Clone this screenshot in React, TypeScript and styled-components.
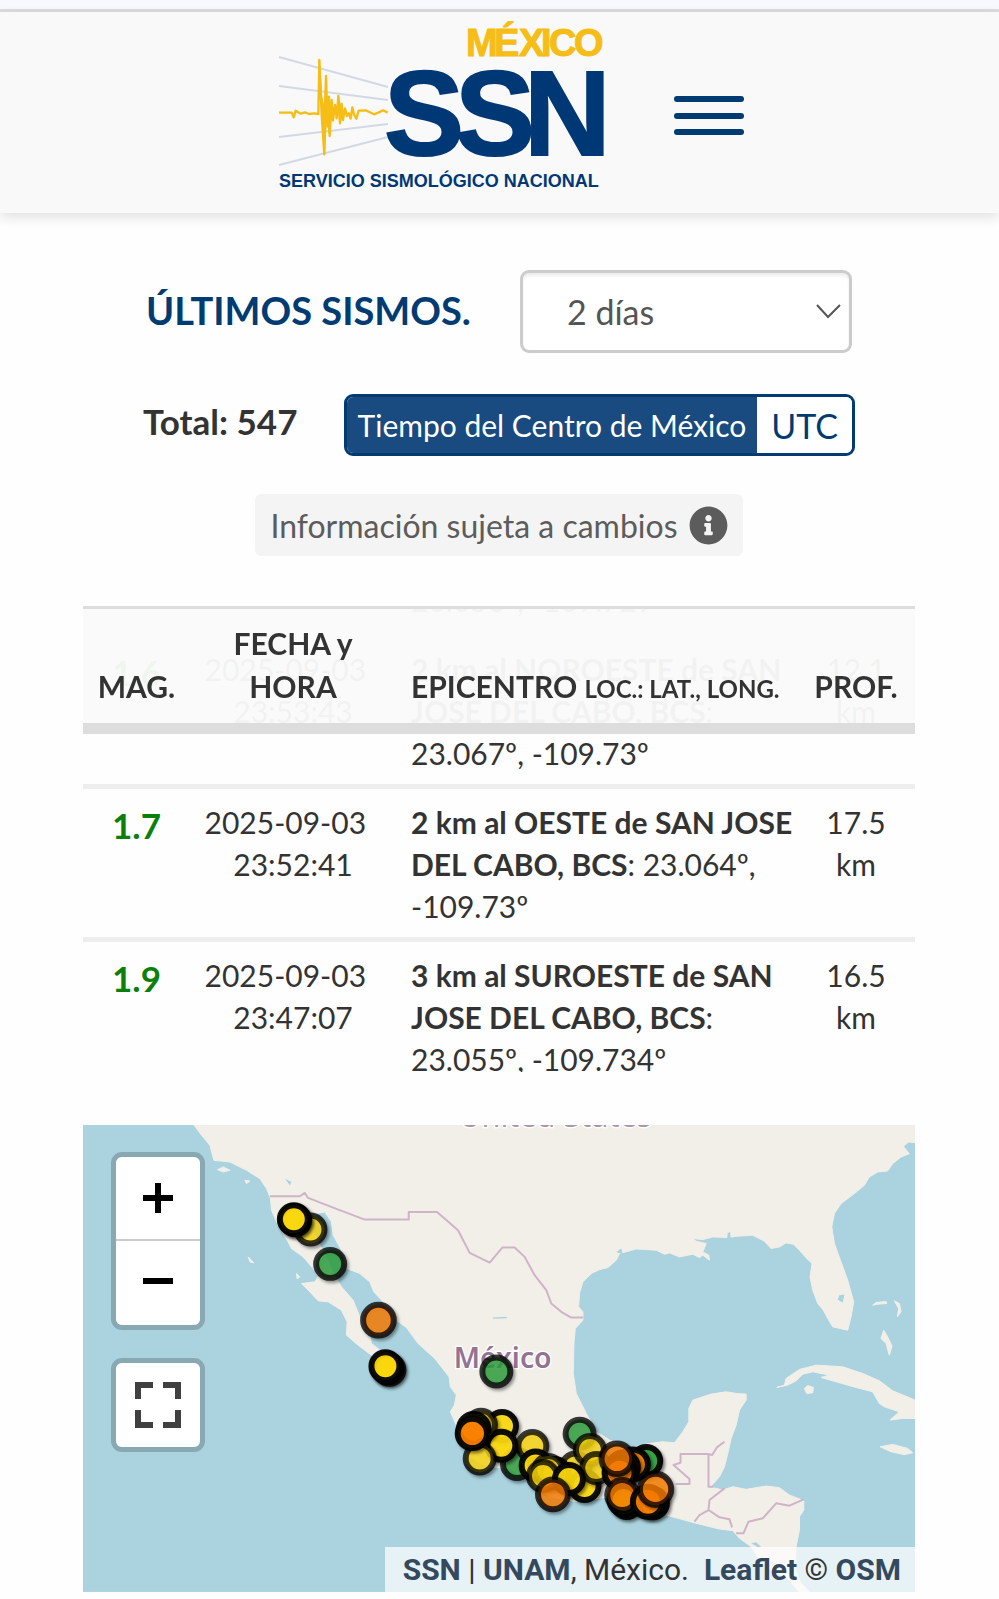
import React, { useLayoutEffect, useRef, useState } from 'react';
import styled, { createGlobalStyle } from 'styled-components';
import { FaInfoCircle } from 'react-icons/fa';

const NAVY = '#003b71';

const GlobalStyle = createGlobalStyle`
  *, *::before, *::after { box-sizing: border-box; }
  body {
    margin: 0;
    background: #fefefe;
    color: #333;
    font-family: Lato, "Liberation Sans", sans-serif;
  }
  button, select { font: inherit; cursor: pointer; }
`;

const TopStrip = styled.div`
  height: 12px;
  background: #f8f8ff;
  border-bottom: 3px solid #dddde1;
`;

const Header = styled.header`
  display: flex;
  justify-content: center;
  align-items: flex-start;
  gap: 70px;
  height: 201px;
  padding-left: 22px;
  background: #f9f9f9;
  box-shadow: 0 4px 12px rgba(0, 0, 0, 0.12);
`;

const LogoLink = styled.a`
  display: block;
  line-height: 0;
`;

const MenuButton = styled.button`
  display: flex;
  flex-direction: column;
  justify-content: space-between;
  width: 70px;
  height: 39px;
  margin-top: 84px;
  padding: 0;
  border: 0;
  background: none;
`;

const MenuBar = styled.span`
  height: 6px;
  border-radius: 3px;
  background: ${NAVY};
`;

const Main = styled.main`
  padding: 57px 84px 7px 83px;
`;

const Line = styled.div<{ $gap: number; $inset: number }>`
  display: flex;
  justify-content: space-between;
  align-items: flex-start;
  padding: 0 ${(p) => p.$inset}px;
  margin-bottom: ${(p) => p.$gap}px;
`;

const Title = styled.h1`
  margin: 0;
  font-size: 38px;
  line-height: 80px;
  font-weight: 700;
  color: ${NAVY};
`;

const SelectWrap = styled.div`
  position: relative;
  width: 332px;
`;

const Select = styled.select`
  appearance: none;
  width: 100%;
  height: 83px;
  padding: 0 44px;
  border: 3px solid #ccc;
  border-radius: 9px;
  background: #fff;
  box-shadow: inset 0 3px 3px rgba(0, 0, 0, 0.07);
  font-size: 34px;
  color: #555;
`;

const Chevron = styled.svg`
  position: absolute;
  right: 11px;
  top: 34px;
  pointer-events: none;
`;

const Total = styled.p`
  margin: 0;
  font-size: 35px;
  line-height: 54px;
  font-weight: 700;
`;

const Toggle = styled.div`
  display: flex;
  border: 3px solid ${NAVY};
  border-radius: 9px;
  overflow: hidden;
`;

const ToggleButton = styled.button<{ $active: boolean; $wide?: boolean }>`
  height: 56px;
  padding: 0 ${(p) => (p.$wide ? 11 : 14)}px;
  border: 0;
  background: ${(p) => (p.$active ? '#194a80' : '#fff')};
  color: ${(p) => (p.$active ? '#fff' : NAVY)};
  font-size: ${(p) => (p.$wide ? 30 : 34)}px;
`;

const NoticeRow = styled.div`
  display: flex;
  justify-content: center;
  margin-bottom: 50px;
`;

const Notice = styled.div`
  display: flex;
  align-items: center;
  gap: 11px;
  height: 62px;
  padding: 0 15px;
  border-radius: 6px;
  background: #f4f4f4;
  color: #5c5c5c;
  font-size: 32px;
`;

const Scroller = styled.div`
  height: 466px;
  overflow-y: auto;
  scrollbar-width: none;
  margin-bottom: 53px;
`;

const Table = styled.table`
  width: 100%;
  table-layout: fixed;
  border-collapse: separate;
  border-spacing: 0;
  font-size: 30px;
  line-height: 42px;
`;

const HeadCell = styled.th<{ $left?: boolean }>`
  position: sticky;
  top: 0;
  padding: ${(p) => (p.$left ? '13px 0 15px 15px' : '13px 0 15px')};
  border-top: 3px solid #ddd;
  border-bottom: 11px solid #ddd;
  background: rgba(250, 250, 250, 0.96);
  vertical-align: bottom;
  text-align: ${(p) => (p.$left ? 'left' : 'center')};
  font-weight: 700;
  line-height: 43px;

  small {
    font-size: 24px;
    line-height: 24px;
  }
`;

const Cell = styled.td<{ $left?: boolean; $side?: number }>`
  padding: 12px ${(p) => p.$side ?? 0}px 10px ${(p) => (p.$left ? 15 : p.$side ?? 0)}px;
  border-top: 5px solid #eee;
  vertical-align: top;
  text-align: ${(p) => (p.$left ? 'left' : 'center')};
`;

const Magnitude = styled.strong`
  display: block;
  font-size: 35px;
  line-height: 48px;
  color: #0a800a;
`;

const MapFrame = styled.section`
  position: relative;
  overflow: hidden;
  font-family: Roboto, "Liberation Sans", sans-serif;
`;

const MapSvg = styled.svg`
  display: block;
  width: 100%;
  height: auto;
`;

const Controls = styled.div`
  position: absolute;
  left: 28px;
  top: 27px;
  display: flex;
  flex-direction: column;
  gap: 28px;
`;

const ControlGroup = styled.div`
  border: 5px solid rgba(0, 0, 0, 0.2);
  background-clip: padding-box;
  border-radius: 11px;
  overflow: hidden;
`;

const ControlButton = styled.button`
  display: flex;
  align-items: center;
  justify-content: center;
  width: 84px;
  height: 84px;
  padding: 0;
  border: 0;
  background: #fff;

  &:not(:last-child) { border-bottom: 2px solid #ccc; }
`;

const Attribution = styled.div`
  position: absolute;
  right: 0;
  bottom: 0;
  padding: 0 14px 0 18px;
  background: rgba(255, 255, 255, 0.7);
  font-size: 30px;
  line-height: 45px;
  white-space: pre;
  color: #333;

  a {
    color: #34495e;
    font-weight: 700;
    text-decoration: none;
  }
`;

type Quake = {
  mag: string;
  date: string;
  time: string;
  place: string;
  coords: string;
  depth: string;
};

const quakes: Quake[] = [
  { mag: '1.8', date: '2025-09-03', time: '23:55:02', place: '3 km al NOROESTE de SAN JOSE DEL CABO, BCS', coords: '23.056º, -109.729º', depth: '15.2' },
  { mag: '1.6', date: '2025-09-03', time: '23:53:43', place: '2 km al NOROESTE de SAN JOSE DEL CABO, BCS', coords: '23.067º, -109.73º', depth: '12.1' },
  { mag: '1.7', date: '2025-09-03', time: '23:52:41', place: '2 km al OESTE de SAN JOSE DEL CABO, BCS', coords: '23.064º, -109.73º', depth: '17.5' },
  { mag: '1.9', date: '2025-09-03', time: '23:47:07', place: '3 km al SUROESTE de SAN JOSE DEL CABO, BCS', coords: '23.055º, -109.734º', depth: '16.5' },
];

const LATEST_OFFSET = 256;

function QuakeTable() {
  const ref = useRef<HTMLDivElement>(null);
  useLayoutEffect(() => {
    if (ref.current) ref.current.scrollTop = LATEST_OFFSET;
  }, []);
  return (
    <Scroller ref={ref}>
      <Table>
        <colgroup>
          <col style={{ width: 107 }} />
          <col style={{ width: 206 }} />
          <col />
          <col style={{ width: 118 }} />
        </colgroup>
        <thead>
          <tr>
            <HeadCell scope="col">MAG.</HeadCell>
            <HeadCell scope="col">FECHA y<br />HORA</HeadCell>
            <HeadCell scope="col" $left>EPICENTRO <small>LOC.: LAT., LONG.</small></HeadCell>
            <HeadCell scope="col">PROF.</HeadCell>
          </tr>
        </thead>
        <tbody>
          {quakes.map((q) => (
            <tr key={q.time}>
              <Cell><Magnitude>{q.mag}</Magnitude></Cell>
              <Cell>{q.date}{'\u00a0\u00a0'}<br />{q.time}</Cell>
              <Cell $left><strong>{q.place}</strong>: {q.coords}</Cell>
              <Cell $side={15}>{q.depth} km</Cell>
            </tr>
          ))}
        </tbody>
      </Table>
    </Scroller>
  );
}

function Logo() {
  return (
    <svg width="326" height="180" viewBox="279 12 326 180" role="img" aria-label="SSN México">
      <g stroke="#d3d9e4" strokeWidth="2" fill="none">
        <path d="M280 57 389 87M280 86l109 14M280 137l109-13M280 165l109-28" />
      </g>
      <g transform="translate(260 0) scale(0.3333)" stroke="#f6bd16" strokeLinejoin="round">
        <path
          d="M60 338H98L104 352 110 332 125 341 138 337 150 342 165 340 178 342 181 180 188 345 196 463 201 228 206 380 210 290 212 408 218 300 222 362 228 315 233 355 238 288 243 370 248 312 252 360 258 325 264 348 270 340 275 356 280 322 286 345 292 356 299 332 320 331 345 343 358 338 372 331 386 338"
          fill="none"
          strokeWidth="7"
        />
        <path d="M181 180 186 260 190 340 196 463 203 340 201 228 196 330 188 290ZM206 290 210 400 216 330ZM238 288 242 368 250 345Z" fill="#f6bd16" strokeWidth="4" />
      </g>
      <g fontFamily="'Liberation Sans', Arial, sans-serif" fontWeight="700">
        <text x="467 495 520 542 550 575" y="56" fontSize="38" fill="#f6bd16" stroke="#f6bd16">MÉXICO</text>
        <text x="385 456 525" y="155" fontSize="120" fill="#003876" stroke="#003876" strokeWidth="2">SSN</text>
        <text x="280" y="187" fontSize="18" fill="#003876">SERVICIO SISMOLÓGICO NACIONAL</text>
      </g>
    </svg>
  );
}

const MAINLAND =
  'M372 44 395 75 420 105 432 150 480 155 530 180 570 205 590 235 602 265 605 300 625 345 655 395 665 415 700 440 730 475 745 500 735 515 695 520 720 545 745 572 775 575 815 600 832 635 830 675 865 705 905 735 940 760 950 735 905 700 897 660 870 620 850 570 815 530 790 490 770 440 745 395 725 340 740 310 765 305 785 335 790 375 815 420 832 475 870 490 900 515 912 545 940 575 972 625 1010 652 1045 700 1095 745 1138 800 1142 830 1160 855 1154 885 1142 905 1155 935 1180 990 1200 1040 1250 1070 1320 1075 1370 1110 1440 1160 1520 1175 1620 1160 1680 1190 1740 1200 1800 1218 1880 1240 1950 1257 1990 1262 2010 1285 2045 1310 2070 1350 2110 1385 2150 1400 2190 1446H2220L2195 1420 2178 1380 2180 1310 2190 1260 2190 1220 2203 1200 2203 1172 2160 1155 2130 1133 2090 1128 2030 1138 1990 1130 1960 1140 1935 1134 1925 1128 1950 1100 1965 1070 1975 1030 1985 985 2000 945 2010 900 2030 870 2030 852 2000 850 1970 845 1925 852 1870 870 1858 895 1858 935 1840 965 1815 998 1780 995 1740 1000 1680 1015 1620 990 1580 965 1550 910 1520 850 1511 790 1513 700 1517 655 1540 630 1540 605 1527 590 1530 548 1540 515 1565 490 1590 478 1615 472 1640 450 1650 430 1700 416 1760 420 1785 432 1800 428 1830 440 1870 432 1890 442 1900 435 1920 450 1918 435 1900 425 1910 400 1880 393 1870 385 1900 388 1930 380 1975 382 2000 378 2050 375 2085 393 2105 415 2130 410 2150 398 2172 402 2190 420 2212 445 2228 460 2222 500 2230 540 2245 580 2262 600 2275 625 2290 650 2335 660 2345 620 2353 575 2335 510 2315 455 2295 400 2287 350 2295 310 2315 280 2355 250 2385 225 2400 200 2425 185 2455 182 2470 160 2495 140 2520 130 2502 108 2518 95 2537 97V44Z';

const ISLANDS = [
  'M2122 832 2145 825 2150 805 2190 778 2240 765 2320 770 2380 790 2430 812 2470 842 2537 870V925L2500 925 2462 930 2490 905 2445 890 2430 880 2410 845 2360 832 2300 815 2255 802 2280 795 2230 785 2200 792 2180 812 2155 825Z',
  'M2205 835 2215 826 2232 832 2230 848 2212 850Z',
  'M2432 1010 2470 1003 2515 1015 2530 1028 2505 1034 2465 1025Z',
  'M2435 685 2443 660 2455 680 2468 708 2460 735 2450 700Z',
  'M2410 585 2420 577 2450 574 2452 580 2425 582ZM2475 572 2490 580 2495 605 2484 620 2488 595Z',
  'M443 178 460 170 480 180 460 185ZM525 210 540 212 530 220ZM535 440 552 458 540 455ZM680 490 690 500 682 506Z',
];

const LAKES = 'M645 205 665 215 660 225ZM2310 555 2325 553 2320 578 2305 568ZM1640 425 1655 415 1660 432ZM1975 368 1982 365 1985 395 1972 390ZM2045 1300 2060 1297 2075 1310 2065 1312ZM1270 622 1310 620 1312 624 1270 626Z';

const BORDERS =
  'M600 258H690L705 248 715 263 790 292 885 328H1017V305H1102L1165 360 1200 428 1260 457 1298 412H1335L1365 440 1395 495 1430 540 1445 580 1475 605 1505 622H1540M1818 1122H1860V1107L1812 1065 1833 1058V1032H1915L1928 1035 1942 1012 1965 995M1917 1032V1130H1932M1965 1135 1920 1170 1917 1200 1950 1222 1980 1228 1988 1252M1917 1200 1890 1215 1875 1235M2000 1270H2022L2037 1235 2080 1225 2120 1180 2160 1187 2203 1168';

const Y = '#ffdb0a';
const G = '#2fa13f';
const O = '#ff8000';

type Pin = [x: number, y: number, color: string, solid?: boolean, radius?: number];

const pins: Pin[] = [
  [722, 358, Y], [676, 330, Y, true], [672, 327, Y, true],
  [781, 461, G], [926, 630, O, false, 46],
  [959, 779, Y], [953, 774, Y, true], [947, 768, Y, true],
  [1280, 784, G],
  [1530, 971, G], [1342, 1062, G], [1388, 1008, Y],
  [1297, 948, Y, true], [1295, 1007, Y, true], [1230, 1045, Y],
  [1234, 944, Y], [1212, 956, Y, true, 44], [1208, 970, O, true, 44],
  [1518, 1072, Y], [1561, 1020, Y], [1545, 1128, Y, true], [1580, 1074, Y],
  [1398, 1066, Y, true], [1455, 1089, Y, true], [1436, 1080, Y], [1420, 1098, Y],
  [1498, 1107, Y, true], [1450, 1153, O, false, 45],
  [1730, 1053, G, true], [1690, 1063, O, true, 45], [1660, 1072, O, true, 45], [1650, 1088, O, true, 45], [1642, 1046, O, false, 46],
  [1672, 1179, Y, true], [1662, 1170, Y, true], [1658, 1155, O, false, 45],
  [1750, 1180, Y, true], [1735, 1175, O, true, 45], [1758, 1138, O, false, 47],
];

function MapDrawing() {
  return (
    <MapSvg viewBox="39 44 2498 1402" role="img" aria-label="Mapa de sismos">
      <defs>
        <filter id="pin-shadow" x="-30%" y="-30%" width="170%" height="170%">
          <feDropShadow dx="6" dy="7" stdDeviation="5" floodColor="#000" floodOpacity="0.5" />
        </filter>
      </defs>
      <rect x="39" y="44" width="2498" height="1402" fill="#aad3df" />
      <g fill="#f2efe9" stroke="#f2efe9" strokeWidth="3" strokeLinejoin="round">
        <path d={MAINLAND} />
        {ISLANDS.map((d) => <path key={d} d={d} />)}
      </g>
      <path d={LAKES} fill="#aad3df" />
      <path d={BORDERS} fill="none" stroke="#cfb3c8" strokeWidth="6" strokeLinejoin="round" />
      <g fontFamily="'Noto Sans', sans-serif" textAnchor="middle" stroke="#fff" strokeWidth="8" paintOrder="stroke">
        <text x="1457" y="51" fontSize="92" fill="#a996a8">United States</text>
        <text x="1299" y="775" fontSize="85" fontWeight="600" fill="#937393">México</text>
      </g>
      {pins.map(([x, y, color, solid, r = 42], i) => (
        <circle
          key={i}
          cx={x}
          cy={y}
          r={r}
          fill={color}
          fillOpacity={solid ? 0.9 : 0.75}
          stroke="#000"
          strokeWidth="18"
          strokeOpacity={solid ? 0.93 : 0.75}
          filter="url(#pin-shadow)"
        />
      ))}
    </MapSvg>
  );
}

function SismosMap() {
  return (
    <MapFrame>
      <MapDrawing />
      <Controls>
        <ControlGroup>
          <ControlButton aria-label="Acercar">
            <svg width="30" height="30" viewBox="0 0 30 30" stroke="#000" strokeWidth="6"><path d="M15 0v30M0 15h30" /></svg>
          </ControlButton>
          <ControlButton aria-label="Alejar">
            <svg width="30" height="30" viewBox="0 0 30 30" stroke="#000" strokeWidth="6"><path d="M0 13h30" /></svg>
          </ControlButton>
        </ControlGroup>
        <ControlGroup>
          <ControlButton aria-label="Pantalla completa">
            <svg width="46" height="46" viewBox="0 0 46 46" fill="none" stroke="#404040" strokeWidth="6">
              <path d="M3 17V3h15M28 3h15v14M43 28v15H28M18 43H3V28" />
            </svg>
          </ControlButton>
        </ControlGroup>
      </Controls>
      <Attribution>
        <a href="#ssn">SSN</a> | <a href="#unam">UNAM</a>, México.{'  '}<a href="#leaflet">Leaflet</a> © <a href="#osm">OSM</a>
      </Attribution>
    </MapFrame>
  );
}

export default function App() {
  const [utc, setUtc] = useState(false);
  return (
    <>
      <GlobalStyle />
      <TopStrip />
      <Header>
        <LogoLink href="#inicio"><Logo /></LogoLink>
        <MenuButton aria-label="Menú"><MenuBar /><MenuBar /><MenuBar /></MenuButton>
      </Header>
      <Main>
        <Line $gap={41} $inset={63}>
          <Title><label htmlFor="periodo">ÚLTIMOS SISMOS.</label></Title>
          <SelectWrap>
            <Select id="periodo" defaultValue="2">
              <option value="1">1 día</option>
              <option value="2">2 días</option>
              <option value="7">7 días</option>
            </Select>
            <Chevron width="25" height="15" viewBox="0 0 25 15" fill="none" stroke="#555" strokeWidth="2">
              <path d="M1 1l11 12L24 1" />
            </Chevron>
          </SelectWrap>
        </Line>
        <Line $gap={38} $inset={60}>
          <Total>Total: 547</Total>
          <Toggle>
            <ToggleButton $wide $active={!utc} onClick={() => setUtc(false)}>Tiempo del Centro de México</ToggleButton>
            <ToggleButton $active={utc} onClick={() => setUtc(true)}>UTC</ToggleButton>
          </Toggle>
        </Line>
        <NoticeRow>
          <Notice>Información sujeta a cambios <FaInfoCircle size={39} /></Notice>
        </NoticeRow>
        <QuakeTable />
        <SismosMap />
      </Main>
    </>
  );
}
